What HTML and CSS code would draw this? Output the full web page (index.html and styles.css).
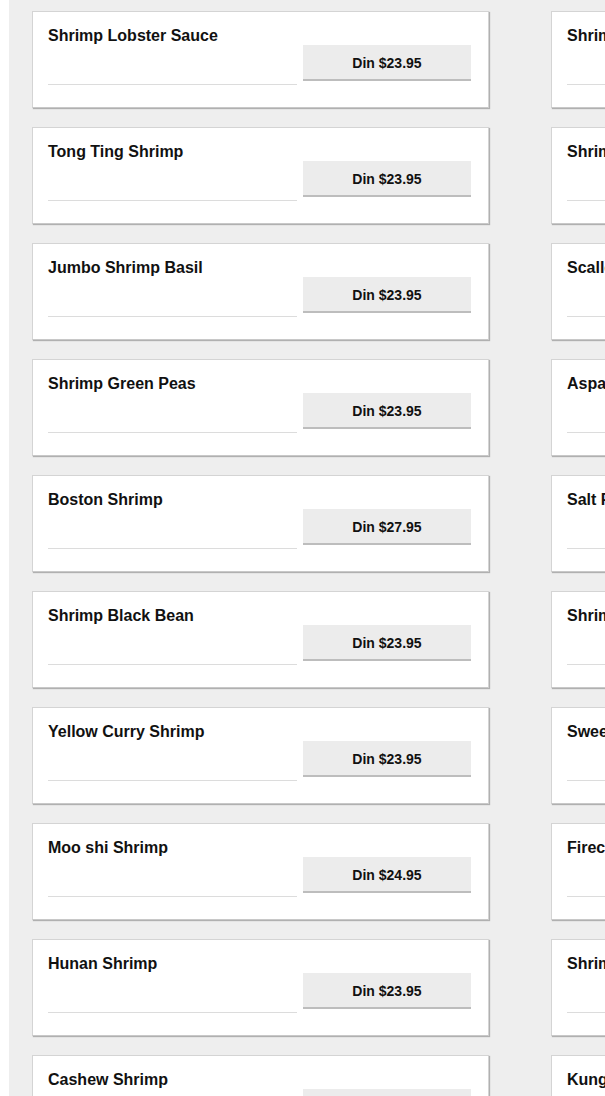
FILE: index.html
```html
<!DOCTYPE html>
<html>
<head>
<meta charset="utf-8">
<link rel="stylesheet" href="styles.css">
</head>
<body>
<div class="page">
  <div class="grid">
    <div class="card"><div class="name">Shrimp Lobster Sauce</div><div class="row"><div class="qty"></div><div class="btn">Din $23.95</div></div></div>
    <div class="card"><div class="name">Shrimp Garlic Sauce</div><div class="row"><div class="qty"></div><div class="btn">Din $23.95</div></div></div>
    <div class="card"><div class="name">Tong Ting Shrimp</div><div class="row"><div class="qty"></div><div class="btn">Din $23.95</div></div></div>
    <div class="card"><div class="name">Shrimp Mixed Vegetables</div><div class="row"><div class="qty"></div><div class="btn">Din $23.95</div></div></div>
    <div class="card"><div class="name">Jumbo Shrimp Basil</div><div class="row"><div class="qty"></div><div class="btn">Din $23.95</div></div></div>
    <div class="card"><div class="name">Scallops Garlic Sauce</div><div class="row"><div class="qty"></div><div class="btn">Din $24.95</div></div></div>
    <div class="card"><div class="name">Shrimp Green Peas</div><div class="row"><div class="qty"></div><div class="btn">Din $23.95</div></div></div>
    <div class="card"><div class="name">Asparagus Shrimp</div><div class="row"><div class="qty"></div><div class="btn">Din $23.95</div></div></div>
    <div class="card"><div class="name">Boston Shrimp</div><div class="row"><div class="qty"></div><div class="btn">Din $27.95</div></div></div>
    <div class="card"><div class="name">Salt Pepper Shrimp</div><div class="row"><div class="qty"></div><div class="btn">Din $24.95</div></div></div>
    <div class="card"><div class="name">Shrimp Black Bean</div><div class="row"><div class="qty"></div><div class="btn">Din $23.95</div></div></div>
    <div class="card"><div class="name">Shrimp Broccoli</div><div class="row"><div class="qty"></div><div class="btn">Din $23.95</div></div></div>
    <div class="card"><div class="name">Yellow Curry Shrimp</div><div class="row"><div class="qty"></div><div class="btn">Din $23.95</div></div></div>
    <div class="card"><div class="name">Sweet Sour Shrimp</div><div class="row"><div class="qty"></div><div class="btn">Din $23.95</div></div></div>
    <div class="card"><div class="name">Moo shi Shrimp</div><div class="row"><div class="qty"></div><div class="btn">Din $24.95</div></div></div>
    <div class="card"><div class="name">Firecracker Shrimp</div><div class="row"><div class="qty"></div><div class="btn">Din $23.95</div></div></div>
    <div class="card"><div class="name">Hunan Shrimp</div><div class="row"><div class="qty"></div><div class="btn">Din $23.95</div></div></div>
    <div class="card"><div class="name">Shrimp Snow Peas</div><div class="row"><div class="qty"></div><div class="btn">Din $23.95</div></div></div>
    <div class="card"><div class="name">Cashew Shrimp</div><div class="row"><div class="qty"></div><div class="btn">Din $23.95</div></div></div>
    <div class="card"><div class="name">Kung Pao Shrimp</div><div class="row"><div class="qty"></div><div class="btn">Din $23.95</div></div></div>
  </div>
</div>
</body>
</html>
```
FILE: styles.css
```css
html, body {
  margin: 0;
  padding: 0;
  overflow: hidden;
  height: 1096px;
}
body {
  background: #ffffff;
  padding-left: 9px;
  font-family: "Liberation Sans", Arial, sans-serif;
  color: #111;
}
.page {
  background: #eeeeee;
  height: 1096px;
  padding: 11px 0 0 23px;
  box-sizing: border-box;
}
.grid {
  display: grid;
  grid-template-columns: 457px 457px;
  column-gap: 62px;
  row-gap: 19px;
  width: 1000px;
}
.card {
  background: #fff;
  border: 1px solid #d4d4d4;
  border-bottom: 1px solid #c8c8c8;
  box-shadow: 1px 1px 1px #b0b0b0;
  height: 97px;
  box-sizing: border-box;
  padding: 14px 16px 0 15px;
}
.name {
  font-size: 16px;
  font-weight: bold;
  line-height: 19px;
  height: 19px;
  white-space: nowrap;
}
.row {
  display: flex;
  gap: 6px;
}
.qty {
  width: 249px;
  height: 39px;
  border-bottom: 1px solid #dcdcdc;
}
.btn {
  width: 168px;
  height: 36px;
  box-sizing: border-box;
  background: #ececec;
  border-bottom: 2px solid #bdbdbd;
  font-size: 14px;
  font-weight: bold;
  display: flex;
  align-items: center;
  justify-content: center;
  padding-top: 2px;
}
```
